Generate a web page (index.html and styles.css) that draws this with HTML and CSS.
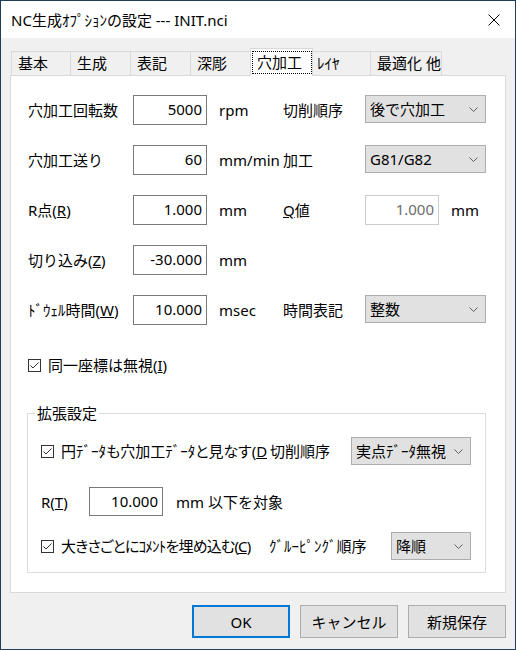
FILE: index.html
```html
<!DOCTYPE html>
<html lang="ja">
<head>
<meta charset="utf-8">
<title>NC生成ｵﾌﾟｼｮﾝの設定</title>
<link rel="stylesheet" href="styles.css">
</head>
<body>
<div class="window">
  <div class="titlebar">
    <span class="title">NC生成ｵﾌﾟｼｮﾝの設定 --- INIT.nci</span>
    <svg class="close" width="12" height="12" viewBox="0 0 12 12"><path d="M0.5 0.5 L11.5 11.5 M11.5 0.5 L0.5 11.5" stroke="#000" stroke-width="1" fill="none"/></svg>
  </div>
  <div class="body">
    <div class="tabs">
      <div class="tab first">基本</div>
      <div class="tab">生成</div>
      <div class="tab">表記</div>
      <div class="tab">深彫</div>
      <div class="tab active"><span class="focus">穴加工</span></div>
      <div class="tab after">ﾚｲﾔ</div>
      <div class="tab last">最適化 他</div>
    </div>
    <div class="panel">
      <div class="form">
        <span class="lbl">穴加工回転数</span>
        <input class="num" type="text" value="5000" readonly>
        <span class="unit">rpm</span>
        <span class="lbl">切削順序</span>
        <div class="combo"><span>後で穴加工</span><svg class="chev" width="9" height="5" viewBox="0 0 9 5"><path d="M0.5 0.5 L4.5 4.5 L8.5 0.5" stroke="#606060" fill="none"/></svg></div>

        <span class="lbl">穴加工送り</span>
        <input class="num" type="text" value="60" readonly>
        <span class="unit">mm/min</span>
        <span class="lbl">加工</span>
        <div class="combo"><span>G81/G82</span><svg class="chev" width="9" height="5" viewBox="0 0 9 5"><path d="M0.5 0.5 L4.5 4.5 L8.5 0.5" stroke="#606060" fill="none"/></svg></div>

        <span class="lbl">R点(<u>R</u>)</span>
        <input class="num" type="text" value="1.000" readonly>
        <span class="unit">mm</span>
        <span class="lbl"><u>Q</u>値</span>
        <div class="pair"><input class="num" type="text" value="1.000" disabled><span>mm</span></div>

        <span class="lbl">切り込み(<u>Z</u>)</span>
        <input class="num" type="text" value="-30.000" readonly>
        <span class="unit">mm</span>
        <span></span>
        <span></span>

        <span class="lbl">ﾄﾞｳｪﾙ時間(<u>W</u>)</span>
        <input class="num" type="text" value="10.000" readonly>
        <span class="unit">msec</span>
        <span class="lbl">時間表記</span>
        <div class="combo"><span>整数</span><svg class="chev" width="9" height="5" viewBox="0 0 9 5"><path d="M0.5 0.5 L4.5 4.5 L8.5 0.5" stroke="#606060" fill="none"/></svg></div>
      </div>

      <div class="check-row top-check">
        <span class="cb"><svg width="13" height="13" viewBox="0 0 13 13"><rect x="0.5" y="0.5" width="12" height="12" fill="#fff" stroke="#333"/><path d="M2.5 6.5 L5 9 L10.5 3.5" stroke="#333" fill="none"/></svg></span>
        <span class="ctext">同一座標は無視(<u>I</u>)</span>
      </div>

      <fieldset class="group">
        <legend>拡張設定</legend>
        <div class="grow row-a">
          <div class="check-row cw-a">
            <span class="cb"><svg width="13" height="13" viewBox="0 0 13 13"><rect x="0.5" y="0.5" width="12" height="12" fill="#fff" stroke="#333"/><path d="M2.5 6.5 L5 9 L10.5 3.5" stroke="#333" fill="none"/></svg></span>
            <span class="ctext clip">円ﾃﾞｰﾀも穴加工ﾃﾞｰﾀと見なす(<u>D</u></span>
          </div>
          <span class="glbl glbl-a">切削順序</span>
          <div class="combo combo-a"><span>実点ﾃﾞｰﾀ無視</span><svg class="chev" width="9" height="5" viewBox="0 0 9 5"><path d="M0.5 0.5 L4.5 4.5 L8.5 0.5" stroke="#606060" fill="none"/></svg></div>
        </div>
        <div class="grow row-b">
          <span class="rlbl">R(<u>T</u>)</span>
          <input class="num num-b" type="text" value="10.000" readonly>
          <span class="unit-b">mm 以下を対象</span>
        </div>
        <div class="grow row-c">
          <div class="check-row cw-c">
            <span class="cb"><svg width="13" height="13" viewBox="0 0 13 13"><rect x="0.5" y="0.5" width="12" height="12" fill="#fff" stroke="#333"/><path d="M2.5 6.5 L5 9 L10.5 3.5" stroke="#333" fill="none"/></svg></span>
            <span class="ctext clip tight">大きさごとにｺﾒﾝﾄを埋め込む(<u>C</u>)</span>
          </div>
          <span class="glbl glbl-c">ｸﾞﾙｰﾋﾟﾝｸﾞ順序</span>
          <div class="combo combo-c"><span>降順</span><svg class="chev" width="9" height="5" viewBox="0 0 9 5"><path d="M0.5 0.5 L4.5 4.5 L8.5 0.5" stroke="#606060" fill="none"/></svg></div>
        </div>
      </fieldset>
    </div>
    <div class="buttons">
      <button class="btn default">OK</button>
      <button class="btn">キャンセル</button>
      <button class="btn">新規保存</button>
    </div>
  </div>
</div>
</body>
</html>
```

FILE: styles.css
```css
html, body {
  margin: 0;
  padding: 0;
  background: #f0f0f0;
}

body {
  font-family: "Noto Sans", "Noto Sans CJK JP", sans-serif;
  font-size: 15px;
  line-height: 20px;
  color: #000;
}

.window {
  width: 516px;
  height: 650px;
  box-sizing: border-box;
  border: 1px solid #1f3d5c;
  background: #f0f0f0;
  display: flex;
  flex-direction: column;
}

.titlebar {
  height: 37px;
  background: #fff;
  display: flex;
  align-items: center;
  padding-left: 10px;
  padding-right: 15px;
}

.title {
  flex: 1;
  white-space: nowrap;
}

.close {
  display: block;
}

.body {
  padding: 0 9px;
}

.tabs {
  margin-top: 10px;
  height: 27px;
  display: flex;
  align-items: flex-end;
  padding-left: 1px;
  position: relative;
  z-index: 1;
}

.tab {
  box-sizing: border-box;
  height: 24px;
  width: 60px;
  border-top: 1px solid #d9d9d9;
  border-left: 1px solid #d9d9d9;
  padding-left: 6px;
  line-height: 22px;
  white-space: nowrap;
  background: #f0f0f0;
}

.tab.first { width: 59px; }

.tab.active {
  width: 63px;
  height: 28px;
  margin-bottom: -1px;
  background: #fff;
  border-right: 1px solid #d9d9d9;
  padding: 2px 0 0 1px;
}

.tab.after {
  width: 57px;
  border-left: none;
  padding-left: 4px;
}

.tab.last {
  width: 72px;
  border-right: 1px solid #d9d9d9;
}

.focus {
  display: block;
  box-sizing: border-box;
  width: 60px;
  height: 23px;
  border: 1px dotted #000;
  padding-left: 4px;
  line-height: 20px;
}

.panel {
  box-sizing: border-box;
  height: 518px;
  background: #fff;
  border: 1px solid #d9d9d9;
}

.form {
  display: grid;
  grid-template-columns: 105px 74px 76px 82px 121px;
  grid-auto-rows: 30px;
  row-gap: 20px;
  padding: 19px 0 0 17px;
  align-items: center;
}

.lbl {
  white-space: nowrap;
}

.unit {
  padding-left: 12px;
  white-space: nowrap;
}

.num {
  box-sizing: border-box;
  width: 74px;
  height: 30px;
  margin: 0;
  border: 1px solid #7a7a7a;
  padding: 0 4px 2px 0;
  font: inherit;
  text-align: right;
  color: #000;
  background: #fff;
  outline: none;
}

.num:disabled {
  color: #6d6d6d;
  border-color: #cccccc;
  background: #fff;
}

.pair {
  display: flex;
  align-items: center;
  gap: 12px;
  white-space: nowrap;
}

.combo {
  box-sizing: border-box;
  height: 28px;
  width: 121px;
  align-self: start;
  background: #e1e1e1;
  border: 1px solid #adadad;
  display: flex;
  align-items: center;
  justify-content: space-between;
  padding: 0 7px 0 4px;
  white-space: nowrap;
}

.chev {
  display: block;
  flex: none;
}

.check-row {
  display: flex;
  align-items: center;
  gap: 7px;
  height: 20px;
  white-space: nowrap;
}

.ctext {
  font-feature-settings: "palt";
}

.tight {
  letter-spacing: -0.8px;
}

.cb, .cb svg {
  display: block;
  flex: none;
}

.top-check {
  margin: 30px 0 0 17px;
}

.group {
  margin: 28px 0 0 16px;
  width: 459px;
  box-sizing: border-box;
  border: 1px solid #dcdcdc;
  padding: 14px 0 12px 0;
  min-width: 0;
}

.group legend {
  margin-left: 7px;
  padding: 0 2px;
  line-height: 20px;
}

.grow {
  display: flex;
  align-items: center;
  height: 28px;
  padding-left: 13px;
}

.row-b {
  margin-top: 22px;
  height: 29px;
}

.row-c {
  margin-top: 16px;
}

.cw-a {
  width: 229px;
  flex: none;
}

.cw-c {
  width: 228px;
  flex: none;
}

.clip {
  overflow: hidden;
}

.glbl {
  flex: none;
  white-space: nowrap;
}

.glbl-a { width: 81px; }
.glbl-c { width: 122px; }

.combo-a { width: 120px; align-self: center; }
.combo-c { width: 80px; align-self: center; }

.rlbl {
  width: 48px;
  flex: none;
}

.num-b {
  height: 29px;
}

.unit-b {
  margin-left: 13px;
  white-space: nowrap;
}

.buttons {
  display: flex;
  justify-content: flex-end;
  gap: 10px;
  margin-top: 12px;
}

.btn {
  box-sizing: border-box;
  width: 98px;
  height: 33px;
  margin: 0;
  background: #e1e1e1;
  border: 1px solid #adadad;
  font: inherit;
  color: #000;
  padding: 0;
}

.btn.default {
  border: 2px solid #0078d7;
}
```
